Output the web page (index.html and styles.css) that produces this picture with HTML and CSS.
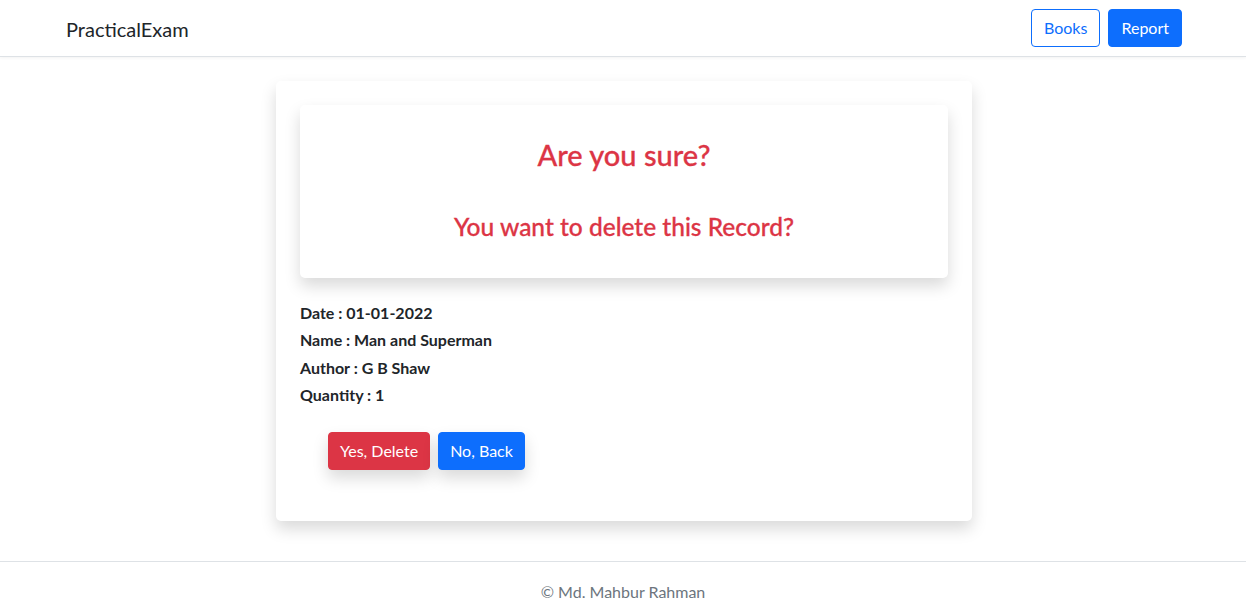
FILE: index.html
```html
<!DOCTYPE html>
<html lang="en">
<head>
<meta charset="utf-8">
<title>PracticalExam</title>
<link rel="stylesheet" href="styles.css">
</head>
<body>
<header class="navbar">
  <div class="container nav-inner">
    <a class="brand" href="#">PracticalExam</a>
    <div class="nav-actions">
      <a class="btn btn-outline-primary" href="#">Books</a>
      <a class="btn btn-primary" href="#">Report</a>
    </div>
  </div>
</header>
<main class="main">
  <div class="card outer">
    <div class="card inner">
      <h3 class="title">Are you sure?</h3>
      <h4 class="subtitle">You want to delete this Record?</h4>
    </div>
    <div class="details">
      <div class="row">Date : 01-01-2022</div>
      <div class="row">Name : Man and Superman</div>
      <div class="row">Author : G B Shaw</div>
      <div class="row">Quantity : 1</div>
    </div>
    <div class="actions">
      <a class="btn btn-danger shadow" href="#">Yes, Delete</a>
      <a class="btn btn-primary shadow" href="#">No, Back</a>
    </div>
  </div>
</main>
<footer class="footer">© Md. Mahbur Rahman</footer>
</body>
</html>
```

FILE: styles.css
```css
* { box-sizing: border-box; }
html, body { margin: 0; padding: 0; }
body {
  font-family: Lato, "Noto Sans", "Liberation Sans", sans-serif;
  font-size: 16px;
  line-height: 1.5;
  color: #212529;
  background: #fff;
}
a { text-decoration: none; }
.container {
  max-width: 1140px;
  margin: 0 auto;
  padding: 0 12px;
}
.navbar {
  height: 57px;
  border-bottom: 1px solid #dee2e6;
  box-shadow: 0 1px 3px rgba(0,0,0,0.05);
}
.nav-inner {
  height: 56px;
  display: flex;
  align-items: center;
  justify-content: space-between;
}
.brand {
  font-size: 20px;
  color: #212529;
  padding-top: 2px;
  margin-left: 1px;
}
.nav-actions { display: flex; gap: 8px; margin-right: -1px; }
.btn {
  display: inline-block;
  height: 38px;
  line-height: 36px;
  padding: 0 12px;
  font-size: 16px;
  border-radius: 4px;
  border: 1px solid transparent;
}
.btn-outline-primary { color: #0d6efd; border-color: #0d6efd; background: #fff; }
.btn-primary { color: #fff; background: #0d6efd; border-color: #0d6efd; }
.btn-danger { color: #fff; background: #dc3545; border-color: #dc3545; }
.shadow { box-shadow: 0 8px 16px rgba(0,0,0,0.15); }
.actions .btn { padding: 0 11px; }
.main {
  padding: 24px 0 40px 2px;
  display: flex;
  justify-content: center;
}
.card {
  background: #fff;
  border-radius: 5px;
}
.outer {
  width: 696px;
  height: 440px;
  padding: 24px;
  box-shadow: 0 8px 16px rgba(0,0,0,0.15);
}
.inner {
  height: 173px;
  padding-top: 33px;
  text-align: center;
  color: #dc3545;
  box-shadow: 0 8px 16px rgba(0,0,0,0.15);
}
.title {
  margin: 0;
  font-size: 29px;
  font-weight: 500;
  line-height: 1.2;
  -webkit-text-stroke: 0.3px #dc3545;
}
.subtitle {
  margin: 39px 0 0;
  font-size: 24.5px;
  font-weight: 500;
  line-height: 1.2;
  -webkit-text-stroke: 0.3px #dc3545;
}
.details {
  margin-top: 22px;
  font-weight: 700;
}
.row { height: 27.3px; line-height: 26px; }
.actions {
  margin-top: 23px;
  padding-left: 28px;
  display: flex;
  gap: 8px;
}
.footer {
  border-top: 1px solid #dee2e6;
  height: 54px;
  padding-top: 18px;
  text-align: center;
  color: #6c757d;
}
```
